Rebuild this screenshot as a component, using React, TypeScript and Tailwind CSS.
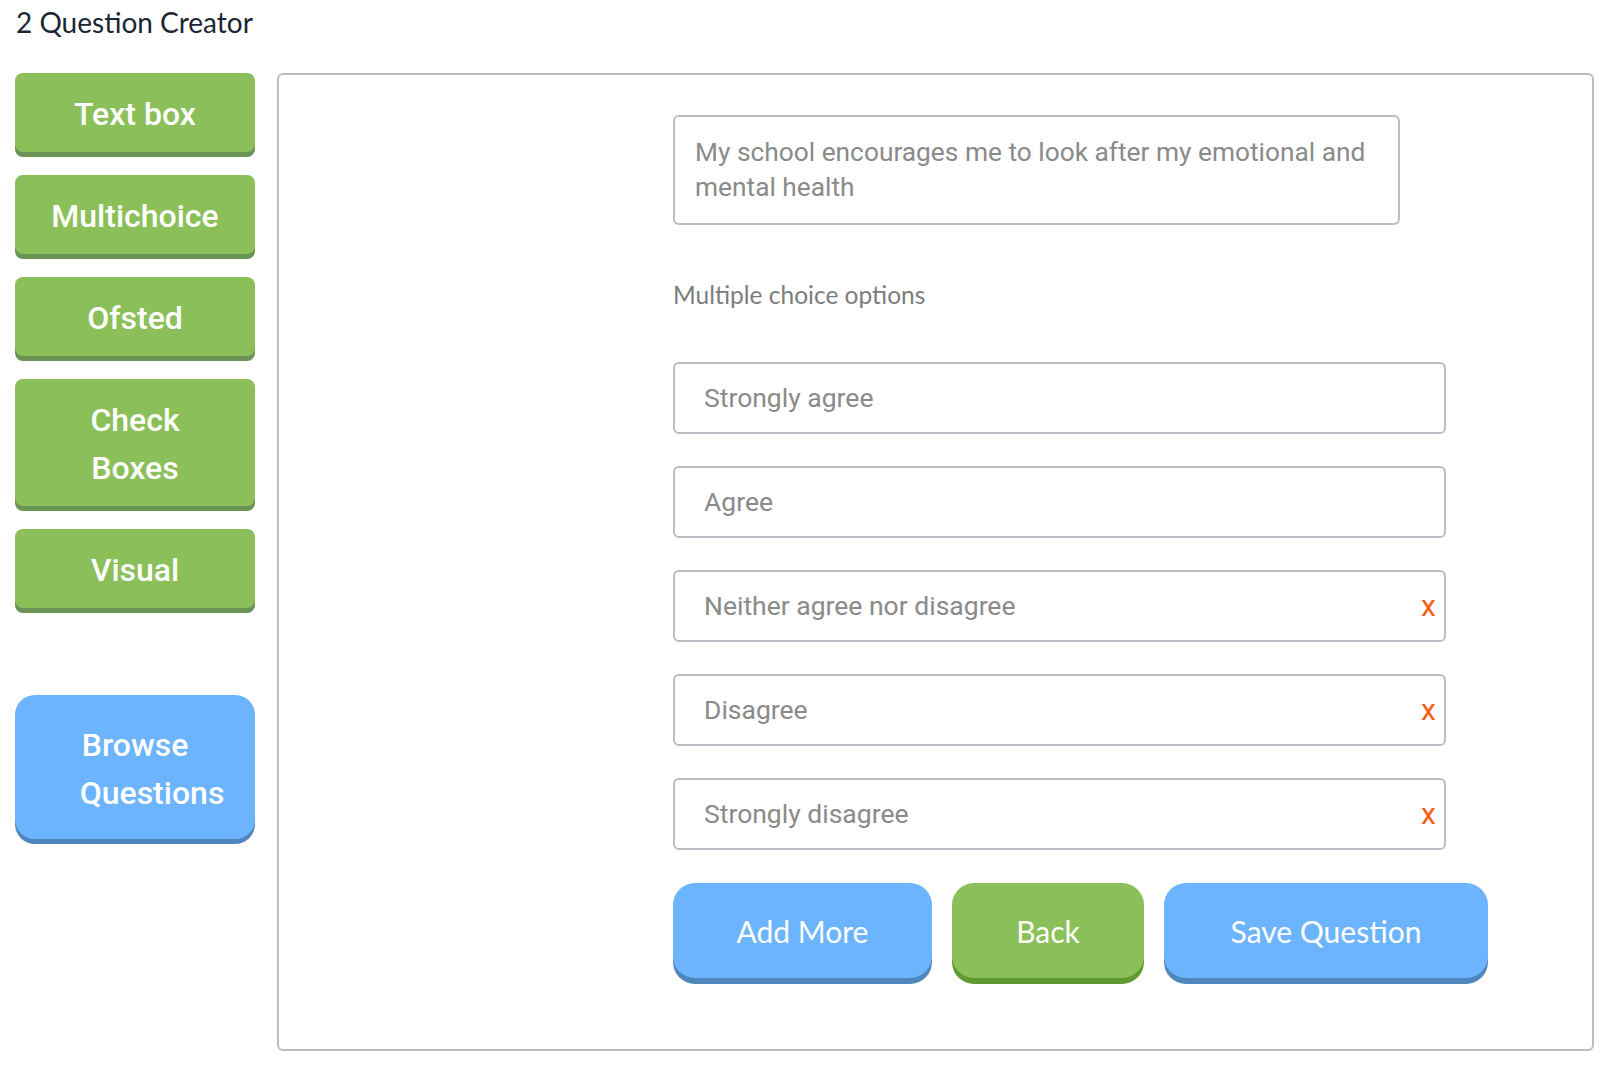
import React from 'react';

const sideButtons = [
  { label: ['Text box'], mt: 'mt-0' },
  { label: ['Multichoice'], mt: 'mt-[23px]' },
  { label: ['Ofsted'], mt: 'mt-[23px]' },
  { label: ['Check', 'Boxes'], mt: 'mt-[23px]' },
  { label: ['Visual'], mt: 'mt-[23px]' },
];

const options = [
  { text: 'Strongly agree', removable: false },
  { text: 'Agree', removable: false },
  { text: 'Neither agree nor disagree', removable: true },
  { text: 'Disagree', removable: true },
  { text: 'Strongly disagree', removable: true },
];

const App: React.FC = () => {
  return (
    <div className="w-[1607px] h-[1069px] bg-white overflow-hidden">
      {/* Title */}
      <div className="h-[73px] pl-[16px]">
        <h1 className="font-[Lato,sans-serif] text-[28px] leading-[45px] text-[#1b2634]">2 Question Creator</h1>
      </div>

      <div className="flex items-start">
        {/* Sidebar */}
        <div className="ml-[15px] w-[240px] flex flex-col">
          {sideButtons.map((b, i) => (
            <button
              key={i}
              className={`${b.mt} w-full bg-[#8bbf59] rounded-[8px] shadow-[0_5px_0_#6a9455] pt-[17px] pb-[14px] font-[Roboto,sans-serif] font-medium text-[32px] leading-[48px] text-white text-center`}
            >
              {b.label.map((l) => (
                <div key={l}>{l}</div>
              ))}
            </button>
          ))}

          <button className="mt-[87px] w-full bg-[#6cb4fe] rounded-[20px] shadow-[0_5px_0_#4f86bc] pt-[26px] pb-[22px] font-[Roboto,sans-serif] font-medium text-[32px] leading-[48px] text-white text-center">
            <div>Browse</div>
            <div className="pl-[34px]">Questions</div>
          </button>
        </div>

        {/* Main panel */}
        <div className="ml-[22px] w-[1317px] h-[978px] border-2 border-[#b9bec6] rounded-[6px] pl-[394px] pt-[40px]">
          <div className="w-[727px] border-2 border-[#b9bec6] rounded-[6px] pl-[20px] pr-[6px] pt-[18px] pb-[18px] font-[Roboto,sans-serif] text-[26.3px] leading-[35px] text-[#8a8a8a]">
            My school encourages me to look after my emotional and mental health
          </div>

          <div className="mt-[55px] font-[Lato,sans-serif] text-[24.5px] leading-[30px] text-[#7d7d7d]">
            Multiple choice options
          </div>

          <div className="mt-[52px] flex flex-col gap-[32px]">
            {options.map((o) => (
              <div
                key={o.text}
                className="w-[773px] h-[72px] border-2 border-[#b9bec6] rounded-[6px] flex items-center justify-between pl-[29px] pr-[8px]"
              >
                <span className="font-[Roboto,sans-serif] text-[26.5px] text-[#8a8a8a]">{o.text}</span>
                {o.removable && (
                  <span className="font-[Roboto,sans-serif] text-[30px] leading-none text-[#ff5a1a] pb-[1px]">x</span>
                )}
              </div>
            ))}
          </div>

          <div className="mt-[33px] flex gap-[20px]">
            <button className="w-[259px] h-[95px] bg-[#6cb4fe] rounded-[22px] shadow-[0_6px_0_#4f86bc] pt-[2px] font-[Lato,sans-serif] text-[30px] text-white">
              Add More
            </button>
            <button className="w-[192px] h-[95px] bg-[#8bbf59] rounded-[22px] shadow-[0_6px_0_#5f9a30] pt-[2px] font-[Lato,sans-serif] text-[30px] text-white">
              Back
            </button>
            <button className="w-[324px] h-[95px] bg-[#6cb4fe] rounded-[22px] shadow-[0_6px_0_#4f86bc] pt-[2px] font-[Lato,sans-serif] text-[30px] text-white">
              Save Question
            </button>
          </div>
        </div>
      </div>
    </div>
  );
};

export default App;
